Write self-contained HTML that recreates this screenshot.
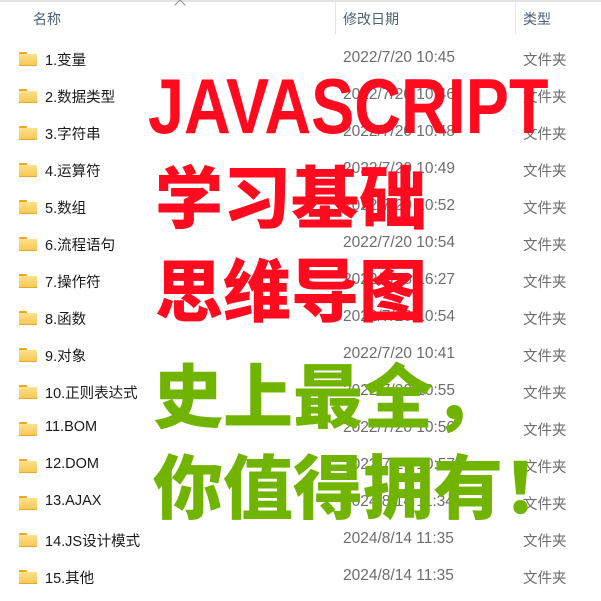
<!DOCTYPE html>
<html><head><meta charset="utf-8"><style>
html,body{margin:0;padding:0;background:#fff;width:601px;height:601px;overflow:hidden;position:relative;font-family:"Liberation Sans","Noto Sans CJK SC",sans-serif;}
.topline{position:absolute;left:0;top:0;width:601px;height:2px;background:#e3e3e3;}
.sep{position:absolute;top:2px;width:1px;height:32px;background:#e5e5e5;}
.hdr{position:absolute;top:9px;font-size:14px;color:#4c607a;}
.caret{position:absolute;left:176px;top:1px;width:7px;height:7px;border-left:1px solid #8a8a8a;border-top:1px solid #8a8a8a;transform:rotate(45deg);}
.row{position:absolute;left:0;width:601px;height:20px;font-size:14px;}
.fold{position:absolute;left:19px;top:4px;width:18px;height:13px;}
.fold .tab{position:absolute;left:0;top:0;width:8px;height:3px;background:#e9a82a;border-radius:1px 1px 0 0;}
.fold .body{position:absolute;left:0;top:2px;width:18px;height:11px;background:linear-gradient(#fde08a,#f8c956);border-bottom:1px solid #e3a92e;}
.name{position:absolute;left:45px;top:1px;color:#1a1a1a;font-size:14.5px;}
.date{position:absolute;left:343px;top:1px;color:#6d6d6d;font-size:15.5px;}
.type{position:absolute;left:523px;top:1px;color:#6d6d6d;font-size:14.5px;}
.ov{position:absolute;white-space:nowrap;font-weight:bold;line-height:1;}
.js{left:148px;top:67px;font-size:78px;color:#ff0a1e;transform:scaleX(0.83);transform-origin:0 0;font-family:"Liberation Sans",sans-serif;}
.cn{font-family:"Noto Sans CJK SC",sans-serif;font-weight:900;}
.r{color:#ff0a1e;font-size:68px;left:155px;}
.g{color:#70b400;font-size:70px;left:153px;}
</style></head><body>
<div class="topline"></div>
<div class="caret"></div>
<div class="hdr" style="left:33px">名称</div>
<div class="sep" style="left:335px"></div>
<div class="hdr" style="left:343px">修改日期</div>
<div class="sep" style="left:515px"></div>
<div class="hdr" style="left:523px">类型</div>

<div class="row" style="top:48px"><div class="fold"><div class="tab"></div><div class="body"></div></div><div class="name">1.变量</div><div class="date">2022/7/20 10:45</div><div class="type">文件夹</div></div>
<div class="row" style="top:85px"><div class="fold"><div class="tab"></div><div class="body"></div></div><div class="name">2.数据类型</div><div class="date">2022/7/20 10:46</div><div class="type">文件夹</div></div>
<div class="row" style="top:122px"><div class="fold"><div class="tab"></div><div class="body"></div></div><div class="name">3.字符串</div><div class="date">2022/7/20 10:48</div><div class="type">文件夹</div></div>
<div class="row" style="top:159px"><div class="fold"><div class="tab"></div><div class="body"></div></div><div class="name">4.运算符</div><div class="date">2022/7/20 10:49</div><div class="type">文件夹</div></div>
<div class="row" style="top:196px"><div class="fold"><div class="tab"></div><div class="body"></div></div><div class="name">5.数组</div><div class="date">2022/7/20 10:52</div><div class="type">文件夹</div></div>
<div class="row" style="top:233px"><div class="fold"><div class="tab"></div><div class="body"></div></div><div class="name">6.流程语句</div><div class="date">2022/7/20 10:54</div><div class="type">文件夹</div></div>
<div class="row" style="top:270px"><div class="fold"><div class="tab"></div><div class="body"></div></div><div class="name">7.操作符</div><div class="date">2022/7/28 16:27</div><div class="type">文件夹</div></div>
<div class="row" style="top:307px"><div class="fold"><div class="tab"></div><div class="body"></div></div><div class="name">8.函数</div><div class="date">2022/7/20 10:54</div><div class="type">文件夹</div></div>
<div class="row" style="top:344px"><div class="fold"><div class="tab"></div><div class="body"></div></div><div class="name">9.对象</div><div class="date">2022/7/20 10:41</div><div class="type">文件夹</div></div>
<div class="row" style="top:381px"><div class="fold"><div class="tab"></div><div class="body"></div></div><div class="name">10.正则表达式</div><div class="date">2022/7/20 10:55</div><div class="type">文件夹</div></div>
<div class="row" style="top:418px"><div class="fold"><div class="tab"></div><div class="body"></div></div><div class="name">11.BOM</div><div class="date">2022/7/20 10:56</div><div class="type">文件夹</div></div>
<div class="row" style="top:455px"><div class="fold"><div class="tab"></div><div class="body"></div></div><div class="name">12.DOM</div><div class="date">2022/7/20 10:57</div><div class="type">文件夹</div></div>
<div class="row" style="top:492px"><div class="fold"><div class="tab"></div><div class="body"></div></div><div class="name">13.AJAX</div><div class="date">2024/8/14 11:34</div><div class="type">文件夹</div></div>
<div class="row" style="top:529px"><div class="fold"><div class="tab"></div><div class="body"></div></div><div class="name">14.JS设计模式</div><div class="date">2024/8/14 11:35</div><div class="type">文件夹</div></div>
<div class="row" style="top:566px"><div class="fold"><div class="tab"></div><div class="body"></div></div><div class="name">15.其他</div><div class="date">2024/8/14 11:35</div><div class="type">文件夹</div></div>

<div class="ov js">JAVASCRIPT</div>
<div class="ov cn r" style="top:160px">学习基础</div>
<div class="ov cn r" style="top:253px">思维导图</div>
<div class="ov cn g" style="top:358px">史上最全，</div>
<div class="ov cn g" style="top:449px">你值得拥有！</div>
</body></html>
